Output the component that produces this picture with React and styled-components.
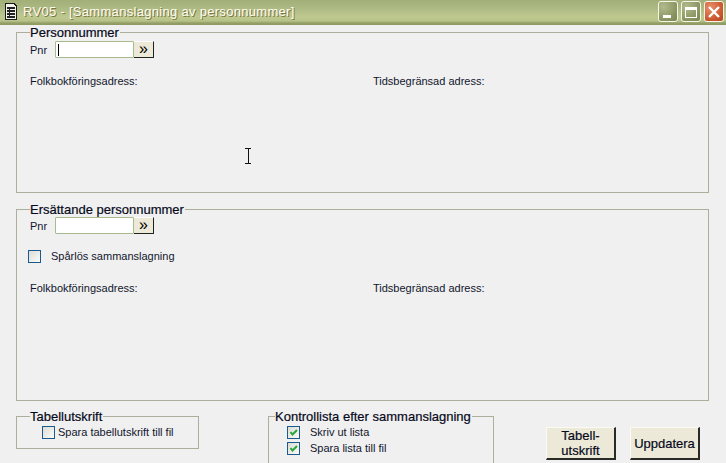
import React from 'react';
import styled, { createGlobalStyle } from 'styled-components';

const Global = createGlobalStyle`
  html, body { margin: 0; padding: 0; background: #f0f0f0; }
  * { box-sizing: border-box; }
`;

const Win = styled.div`
  position: relative;
  width: 726px;
  height: 463px;
  overflow: hidden;
  background: #f0f0f0;
  font-family: "Liberation Sans", Arial, sans-serif;
  color: #10162e;
  display: flex;
  flex-direction: column;
`;

const TitleBar = styled.div`
  height: 25px;
  flex: none;
  padding: 0 2px 2px 4px;
  display: flex;
  align-items: center;
  background: linear-gradient(#a3af78 0, #aab680 6px, #bdc98f 17px, #b6c288 21px, #94a068 23px, #8b985f 25px);
`;

const TitleText = styled.div`
  flex: 1;
  margin-left: 5px;
  font-family: "Liberation Sans", sans-serif;
  font-size: 13px;
  letter-spacing: 0.3px;
  color: #fffdf0;
  text-shadow: 1px 1px 0 #7c7442;
  white-space: nowrap;
`;

const Ctl = styled.div`
  width: 20px;
  height: 21px;
  margin-left: 3px;
  border: 1px solid #f4f6ea;
  border-radius: 3px;
  background: ${p => p.$close
    ? 'radial-gradient(circle at 30% 30%, #e8906a, #c9532a 70%, #b8451f)'
    : 'radial-gradient(circle at 25% 25%, #b0ba8c, #87935f 70%, #788554)'};
  display: flex;
  align-items: center;
  justify-content: center;
`;

const Body = styled.div`
  flex: 1;
  padding: 0 17px 0 16px;
  display: flex;
  flex-direction: column;
`;

const Group = styled.fieldset`
  margin: ${p => p.$mt || 0}px 0 0 ${p => p.$ml || 0}px;
  padding: 0 0 0 13px;
  width: ${p => p.$w || 'auto'};
  height: ${p => p.$h}px;
  border: 1px solid #aeae9c;
  border-bottom-width: ${p => p.$open ? 0 : 1}px;
  min-width: 0;
`;

const Legend = styled.legend`
  margin-left: ${p => p.$ml || 0}px;
  padding: 0 1px 0 0;
  font-size: 13px;
  line-height: 15px;
  color: #06091c;
  -webkit-text-stroke: 0.2px #06091c;
  white-space: nowrap;
`;

const PnrRow = styled.div`
  display: flex;
  align-items: center;
  height: 17px;
  margin-top: ${p => p.$mt || 0}px;
`;

const Label = styled.span`
  font-size: 11px;
  line-height: 14px;
  white-space: nowrap;
`;

const PnrLabel = styled(Label)`
  width: 25px;
`;

const PnrInput = styled.div`
  width: 79px;
  height: 17px;
  background: #fff;
  border: 1px solid #a7bc8c;
  border-radius: 1px;
  padding: 2px;
`;

const Caret = styled.div`
  width: 1px;
  height: 12px;
  background: #000;
`;

const Arrow = styled.div`
  width: 20px;
  height: 17px;
  background: #ece9d8;
  border-right: 1px solid #222;
  border-bottom: 1px solid #222;
  border-top: 1px solid #fdfcf6;
  display: flex;
  align-items: center;
  justify-content: center;
  font-family: "Liberation Sans", sans-serif;
  font-size: 16px;
  line-height: 14px;
  color: #000;
  padding-bottom: 2px;
`;

const AddressRow = styled.div`
  display: grid;
  grid-template-columns: 343px 1fr;
  margin-top: ${p => p.$mt}px;
`;

const Check = styled.div`
  width: 13px;
  height: 13px;
  flex: none;
  border: 1px solid #1b5a8f;
  background: linear-gradient(135deg, #dcdcd6, #fbfbf8);
  display: flex;
  align-items: center;
  justify-content: center;
`;

const CheckRow = styled.div`
  display: flex;
  align-items: center;
  gap: ${p => p.$gap}px;
  height: 16px;
  margin: ${p => p.$mt || 0}px 0 0 ${p => p.$ml || 0}px;
`;

const BottomRow = styled.div`
  display: flex;
  align-items: flex-start;
  margin-top: 8px;
`;

const Buttons = styled.div`
  display: flex;
  gap: 14px;
  margin: 18px 0 0 52px;
`;

const Btn = styled.div`
  width: 70px;
  height: 33px;
  background: #ece9d8;
  border-top: 1px solid #fbfaf3;
  border-left: 1px solid #fbfaf3;
  border-right: 2px solid #2a2a26;
  border-bottom: 2px solid #2a2a26;
  display: flex;
  align-items: center;
  justify-content: center;
  text-align: center;
  font-size: 13px;
  line-height: 15px;
  color: #06091c;
  -webkit-text-stroke: 0.2px #06091c;
`;

const IBeam = styled.svg`
  position: absolute;
  left: 243px;
  top: 148px;
`;

const Tick = () => (
  <svg width="11" height="11" viewBox="0 0 11 11">
    <path d="M2.5 5 L4.5 7.5 L9 3" fill="none" stroke="#27a43a" strokeWidth="2" />
  </svg>
);

const FileIcon = () => (
  <svg width="14" height="17" viewBox="0 0 14 17" shapeRendering="crispEdges">
    <path d="M1.5 .5H10L12.5 3V16.5H1.5Z" fill="#f4f4ee" stroke="#1a1a1a" />
    <path d="M3 5h8M3 8h8M3 11h8M3 14h8" stroke="#222" strokeWidth="1.4" />
    <path d="M5 4v11" stroke="#222" />
  </svg>
);

const Addresses = ({ mt }) => (
  <AddressRow $mt={mt}>
    <Label>Folkbokföringsadress:</Label>
    <Label>Tidsbegränsad adress:</Label>
  </AddressRow>
);

const Pnr = ({ caret, mt }) => (
  <PnrRow $mt={mt}>
    <PnrLabel>Pnr</PnrLabel>
    <PnrInput>{caret && <Caret />}</PnrInput>
    <Arrow>»</Arrow>
  </PnrRow>
);

export default function App() {
  return (
    <Win>
      <Global />
      <TitleBar>
        <FileIcon />
        <TitleText>RV05 - [Sammanslagning av personnummer]</TitleText>
        <Ctl>
          <svg width="14" height="14" viewBox="0 0 14 14"><rect x="2" y="10" width="8" height="3" fill="#fff" /></svg>
        </Ctl>
        <Ctl>
          <svg width="12" height="12" viewBox="0 0 12 12" shapeRendering="crispEdges"><path d="M.5 1.5h11v10H.5Z" fill="none" stroke="#fff" /><rect x="0" y="1" width="12" height="3" fill="#fff" /></svg>
        </Ctl>
        <Ctl $close>
          <svg width="12" height="12" viewBox="0 0 12 12"><path d="M1 1L11 11M11 1L1 11" stroke="#fff" strokeWidth="2.4" /></svg>
        </Ctl>
      </TitleBar>
      <Body>
        <Group $h={168}>
          <Legend>Personnummer</Legend>
          <Pnr caret mt={1} />
          <Addresses mt={16} />
        </Group>
        <Group $h={199} $mt={9}>
          <Legend>Ersättande personnummer</Legend>
          <Pnr />
          <CheckRow $mt={14} $ml={-2} $gap={10}>
            <Check />
            <Label>Spårlös sammanslagning</Label>
          </CheckRow>
          <Addresses mt={17} />
        </Group>
        <BottomRow>
          <Group $w="183px" $h={40}>
            <Legend>Tabellutskrift</Legend>
            <CheckRow $ml={12} $gap={3}>
              <Check />
              <Label>Spara tabellutskrift till fil</Label>
            </CheckRow>
          </Group>
          <Group $w="226px" $h={60} $open $ml={69}>
            <Legend $ml={-7}>Kontrollista efter sammanslagning</Legend>
            <CheckRow $ml={5} $gap={10}>
              <Check><Tick /></Check>
              <Label>Skriv ut lista</Label>
            </CheckRow>
            <CheckRow $ml={5} $gap={10}>
              <Check><Tick /></Check>
              <Label>Spara lista till fil</Label>
            </CheckRow>
          </Group>
          <Buttons>
            <Btn>Tabell-<br />utskrift</Btn>
            <Btn>Uppdatera</Btn>
          </Buttons>
        </BottomRow>
      </Body>
      <IBeam width="10" height="17" viewBox="0 0 10 17" shapeRendering="crispEdges">
        <path d="M2 .5H8M2 15.5H8M5 1V15" stroke="#111" fill="none" />
      </IBeam>
    </Win>
  );
}
